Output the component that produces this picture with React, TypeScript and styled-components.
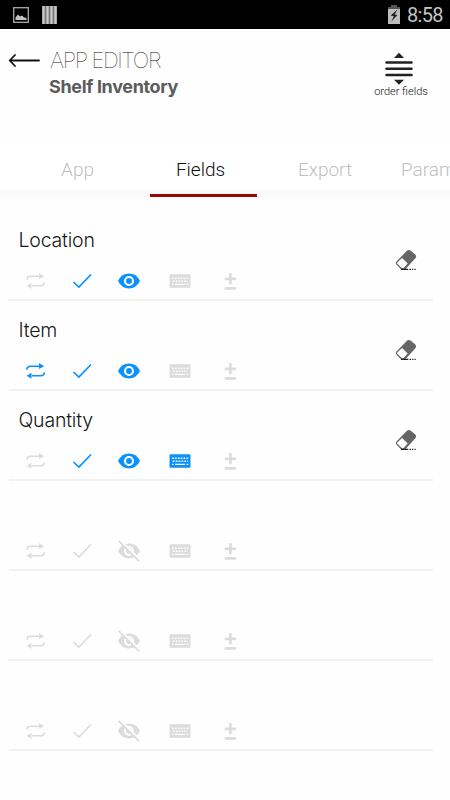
import React from 'react';
import styled, { createGlobalStyle } from 'styled-components';

const BLUE = '#0a91fb';
const GREY = '#dcdcdc';

const GlobalStyle = createGlobalStyle`
  * { box-sizing: border-box; }
  body { margin: 0; background: #fefefe; overflow: hidden; }
  svg { display: block; flex: none; }
`;

const Screen = styled.main`
  width: 450px;
  height: 800px;
  display: flex;
  flex-direction: column;
  overflow: hidden;
  background: #fefefe;
  font-family: Inter, sans-serif;
`;

const StatusBar = styled.div`
  height: 29px;
  flex: none;
  display: flex;
  align-items: center;
  padding: 0 7px 0 13px;
  background: #000;
`;

const Notifications = styled.div`
  display: flex;
  align-items: center;
  gap: 13px;
  flex: 1;
`;

const Clock = styled.time`
  width: 36px;
  margin-left: 7px;
  white-space: nowrap;
  color: #c4c4c4;
  font: 400 20px/29px Roboto, sans-serif;
  letter-spacing: -0.7px;
  padding-top: 2px;
`;

const Header = styled.header`
  height: 116px;
  flex: none;
  display: flex;
  padding: 18px 21px 0 8px;
`;

const BackButton = styled.button`
  display: flex;
  align-items: flex-start;
  width: 32px;
  height: 26px;
  padding: 6px 0 0;
  border: 0;
  background: none;
`;

const Titles = styled.div`
  flex: 1;
  padding-left: 9px;
`;

const Overline = styled.div`
  padding-left: 1px;
  color: #111;
  font-size: 22px;
  font-weight: 100;
  line-height: 26px;
  letter-spacing: -1.38px;
`;

const Title = styled.h1`
  margin: 0;
  color: #5c5c5c;
  font-size: 18px;
  font-weight: 700;
  line-height: 27px;
  letter-spacing: -0.35px;
`;

const OrderButton = styled.button`
  display: flex;
  flex-direction: column;
  align-items: center;
  width: 56px;
  padding: 5px 0 0;
  border: 0;
  background: none;
  color: #111;
  font: 350 11px/13px Roboto, sans-serif;
  white-space: nowrap;
  svg { margin: 0 5px 0 0; }
`;

const Tabs = styled.nav`
  height: 45px;
  flex: none;
  display: flex;
  padding-left: 28px;
  background: #fff;
`;

const Tab = styled.div<{ $width: number; $active?: boolean; $start?: boolean }>`
  width: ${p => p.$width}px;
  flex: none;
  padding-top: 13px;
  text-align: ${p => (p.$start ? 'left' : 'center')};
  padding-left: ${p => (p.$start ? 25 : 0)}px;
  color: ${p => (p.$active ? '#111' : '#bfbfbf')};
  font: 350 19px/24px Roboto, sans-serif;
`;

const TabShade = styled.div`
  height: 20px;
  flex: none;
  padding: 4px 0 0 150px;
  background: linear-gradient(#f9f9f9, #fefefe 12px);
`;

const Indicator = styled.div`
  width: 107px;
  height: 3px;
  background: #990808;
`;

const FieldList = styled.section`
  display: flex;
  flex-direction: column;
  padding: 1px 17px 0 9px;
`;

const FieldRow = styled.article`
  height: 90px;
  flex: none;
  display: flex;
  border-bottom: 2px solid #f2f2f2;
`;

const FieldBody = styled.div`
  flex: 1;
  padding: 15px 0 0 9px;
`;

const FieldName = styled.div`
  height: 46px;
  padding-left: 0.5px;
  color: #181818;
  font-size: 19.5px;
  font-weight: 300;
  line-height: 28px;
  letter-spacing: -0.2px;
`;

const Options = styled.div`
  display: flex;
  align-items: center;
  height: 18px;
  padding-left: 7px;
`;

const Option = styled.span<{ $on?: boolean; $gap?: number }>`
  display: flex;
  margin-right: ${p => p.$gap ?? 0}px;
  color: ${p => (p.$on ? BLUE : GREY)};
`;

const EraseButton = styled.button`
  width: 38px;
  padding: 38px 0 0;
  border: 0;
  background: none;
  display: flex;
  align-items: flex-start;
`;

const PictureIcon = () => (
  <svg width="16" height="16" viewBox="0 0 16 16">
    <rect x=".7" y=".7" width="14.6" height="14.6" fill="none" stroke="#aaa" strokeWidth="1.3" />
    <path d="M2.5 13V10.5L5 7.5 7 9.5 9 8.5 11 10.5 13.5 10.7V13z" fill="#c4c4c4" />
  </svg>
);

const BarsIcon = () => (
  <svg width="15" height="18" viewBox="0 0 15 18">
    <path d="M0 0H15V18H0z" fill="#777" />
    <path d="M1.5 0V18M5.5 0V18M9.5 0V18M13.5 0V18" stroke="#c8c8c8" strokeWidth="2.3" />
  </svg>
);

const BatteryIcon = () => (
  <svg width="12" height="19" viewBox="0 0 12 19">
    <path d="M3 0H9V2H12V5H0V2H3z" fill="#555" />
    <path d="M0 4H12V19H0z" fill="#bcbcbc" />
    <path d="M9.5 4.5 2.6 10.6l3.2.6L3.4 16.5 9.4 9.9l-2.7-.5z" fill="#222" />
  </svg>
);

const BackIcon = () => (
  <svg width="32" height="16" viewBox="0 0 32 16" fill="none" stroke="#111" strokeWidth="1.8" strokeLinecap="round" strokeLinejoin="round">
    <path d="M31 7.5H2M7 2 1.7 7.5 7 13" />
  </svg>
);

const OrderIcon = () => (
  <svg width="28" height="33" viewBox="0 0 28 33">
    <path d="M14 .7 19 6H9zM9 27.7H19L14 32.8z" fill="#222" />
    <path d="M1.5 10.5H26.5M1.5 16.8H26.5M1.5 23H26.5" stroke="#222" strokeWidth="2.5" strokeLinecap="round" />
  </svg>
);

const RepeatIcon = () => (
  <svg width="21" height="20" viewBox="0 0 21 20">
    <path d="M1.8 8.6Q2.2 5.2 5.4 5.2H15M19.4 11.2Q19.2 14.7 15.8 14.7H7" fill="none" stroke="currentColor" strokeWidth="1.6" />
    <path d="M14 2.1 19.2 5.2 14 7.9zM6.5 11.8 1.6 14.8 6.5 17.8z" fill="currentColor" />
  </svg>
);

const CheckIcon = () => (
  <svg width="20" height="20" viewBox="0 0 20 20">
    <path d="M1.5 11 6.9 16 19 3.5" fill="none" stroke="currentColor" strokeWidth="1.7" />
  </svg>
);

const EyeIcon = ({ hidden }: { hidden: boolean }) => (
  <svg width="24" height="22" viewBox="0 0 24 22">
    <path d="M1 11Q4.7 3.6 12 3.6T23 11Q19.3 18.4 12 18.4T1 11z" fill="currentColor" />
    <circle cx="12" cy="11" r="4" fill="none" stroke="#fefefe" strokeWidth="2.1" />
    {hidden && (
      <>
        <path d="M3 0 24 21" stroke="#fefefe" strokeWidth="2" />
        <path d="M1.6 .8 22.2 21.4" stroke="currentColor" strokeWidth="1.7" />
      </>
    )}
  </svg>
);

const KeyboardIcon = () => (
  <svg width="22" height="14" viewBox="0 0 22 14">
    <rect x=".5" y=".3" width="21" height="13.4" rx="1.2" fill="currentColor" />
    <path d="M3 4.2H19.6M3.8 7.3H19" stroke="#fefefe" strokeWidth="1.5" strokeDasharray="1.7 1.2" />
    <path d="M3 10.4H4.6M6 10.4H16M17.5 10.4H19.3" stroke="#fefefe" strokeWidth="1.2" />
  </svg>
);

const PlusMinusIcon = () => (
  <svg width="14" height="20" viewBox="0 0 14 20">
    <path d="M7.4 3V12.2M2.8 7.8H12M2.8 17.3H12" fill="none" stroke="currentColor" strokeWidth="2.7" strokeLinecap="round" />
  </svg>
);

const EraserIcon = () => (
  <svg width="22" height="22" viewBox="0 0 22 22">
    <path d="M11.9 1.8Q13.8.2 15.8 1.8L20 5.3Q22 7.2 20.3 9.3L10.2 20.4H6.2L1.4 15.6Q.2 14 1.5 12.5z" fill="#666" />
    <path d="M7.1 8.9 12.7 14.4 8.4 19.2H7L2.3 14.7Q1.7 14 2.5 13.2z" fill="#fff" />
    <path d="M6 20.3H13.3M14.6 20.3H16M17.1 20.3H18.3M19.5 20.3H20.7" stroke="#222" strokeWidth="1.2" />
  </svg>
);

interface Field {
  name: string;
  repeat?: boolean;
  required?: boolean;
  visible?: boolean;
  keyboard?: boolean;
}

const fields: Field[] = [
  { name: 'Location', required: true, visible: true },
  { name: 'Item', repeat: true, required: true, visible: true },
  { name: 'Quantity', required: true, visible: true, keyboard: true },
  { name: '' },
  { name: '' },
  { name: '' },
];

export default function App() {
  return (
    <Screen>
      <GlobalStyle />
      <StatusBar>
        <Notifications>
          <PictureIcon />
          <BarsIcon />
        </Notifications>
        <BatteryIcon />
        <Clock>8:58</Clock>
      </StatusBar>
      <Header>
        <BackButton aria-label="Back"><BackIcon /></BackButton>
        <Titles>
          <Overline>APP EDITOR</Overline>
          <Title>Shelf Inventory</Title>
        </Titles>
        <OrderButton><OrderIcon />order fields</OrderButton>
      </Header>
      <Tabs>
        <Tab $width={99}>App</Tab>
        <Tab $width={147} $active>Fields</Tab>
        <Tab $width={102}>Export</Tab>
        <Tab $width={135} $start>Param</Tab>
      </Tabs>
      <TabShade><Indicator /></TabShade>
      <FieldList>
        {fields.map((field, i) => (
          <FieldRow key={i}>
            <FieldBody>
              <FieldName>{field.name}</FieldName>
              <Options>
                <Option $on={field.repeat} $gap={26}><RepeatIcon /></Option>
                <Option $on={field.required} $gap={25}><CheckIcon /></Option>
                <Option $on={field.visible} $gap={28}><EyeIcon hidden={!field.visible} /></Option>
                <Option $on={field.keyboard} $gap={32}><KeyboardIcon /></Option>
                <Option><PlusMinusIcon /></Option>
              </Options>
            </FieldBody>
            {field.name && (
              <EraseButton aria-label={`Clear ${field.name}`}><EraserIcon /></EraseButton>
            )}
          </FieldRow>
        ))}
      </FieldList>
    </Screen>
  );
}
